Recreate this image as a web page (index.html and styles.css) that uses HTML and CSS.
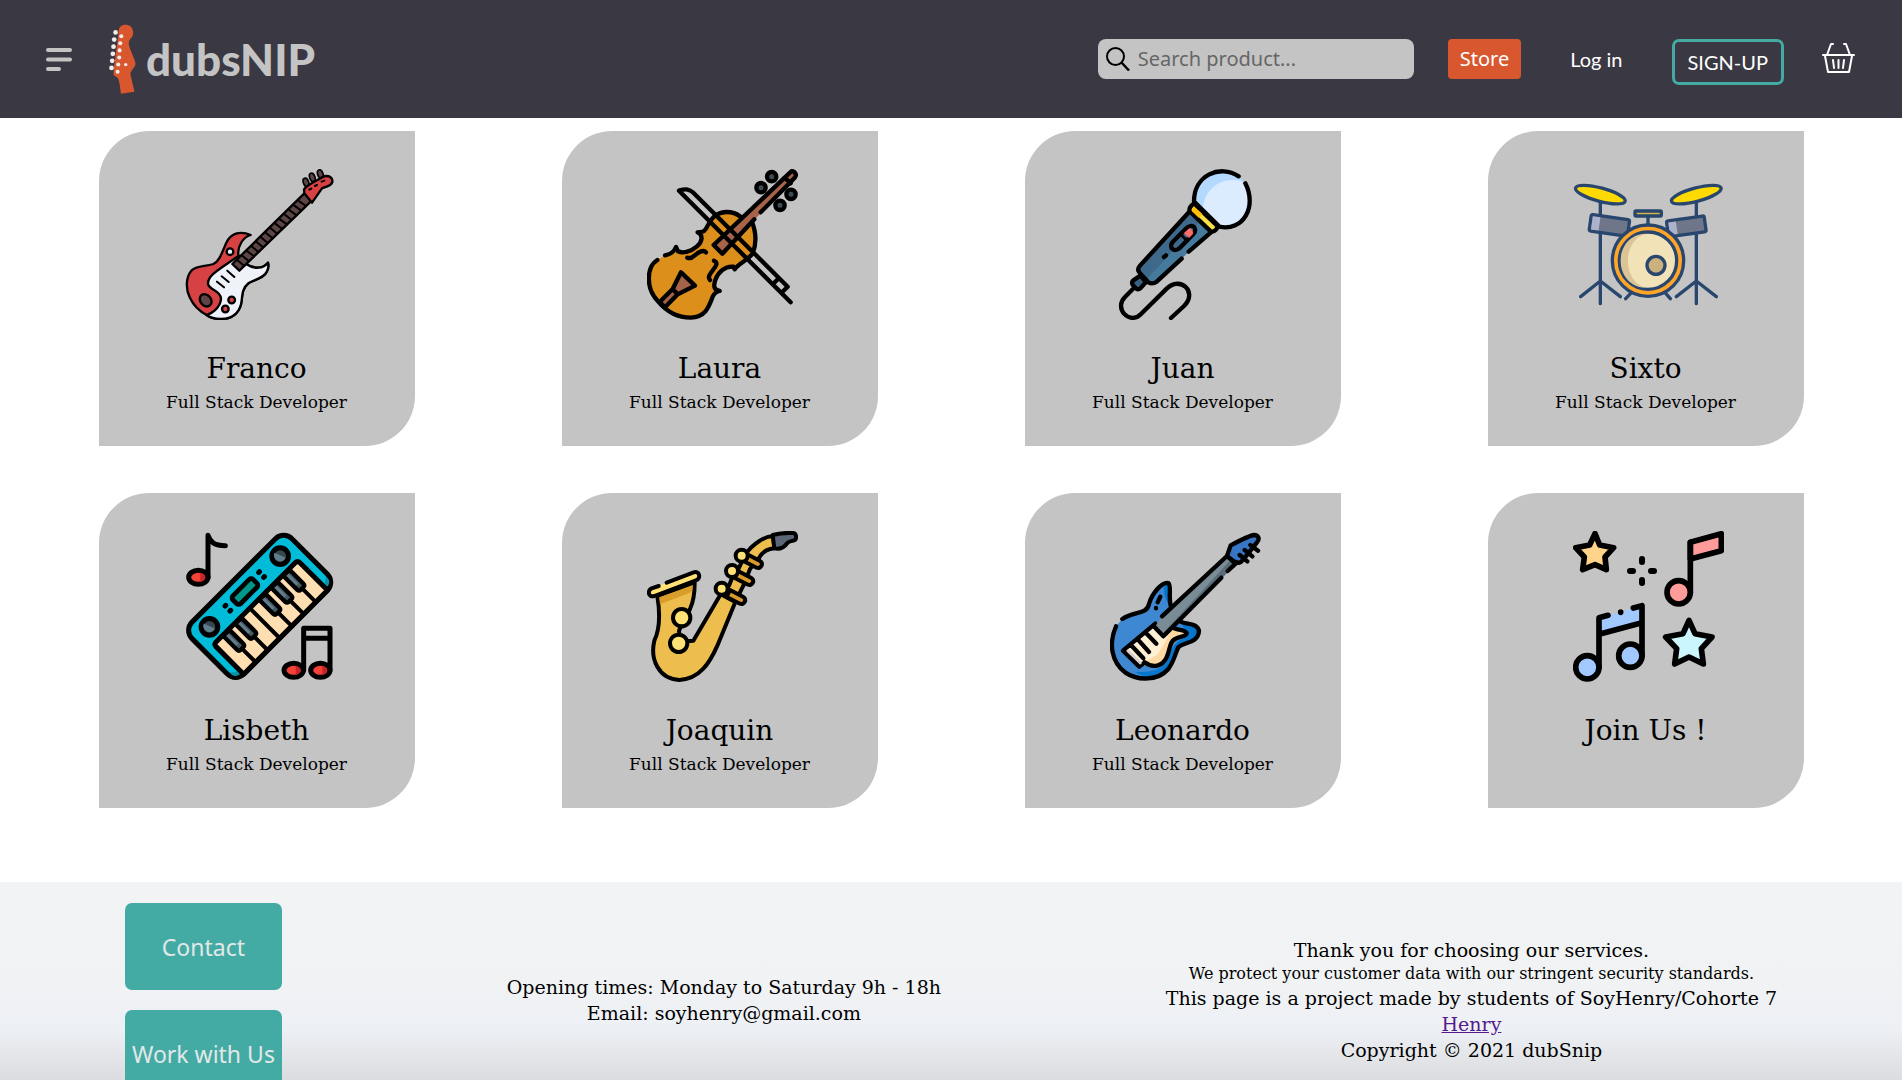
FILE: index.html
```html
<!DOCTYPE html>
<html lang="en">
<head>
<meta charset="utf-8">
<meta name="viewport" content="width=device-width, initial-scale=1">
<title>dubsNIP</title>
<link rel="stylesheet" href="styles.css">
</head>
<body>
<header class="topbar">
  <button class="icon-button" type="button" aria-label="Menu">
    <svg class="menu-icon" viewBox="0 0 27 24" fill="none" stroke="#c4c4c4" stroke-width="4" stroke-linecap="round"><path d="M2 3H24M2 12.500H24M2 22H13"/></svg>
  </button>
  <a class="brand" href="#" aria-label="dubsNIP home">
    <svg class="brand-mark" viewBox="329 69 79 207">
      <path d="M357 95C356 78 365 71 379 71C393 72 401 82 400 98C398 110 387 114 387 127C390 147 402 165 407 186C406 200 392 205 392 218L404 269L364 275C361 255 360 237 354 228L342 220C343 190 352 140 357 95Z" fill="#d8572e"/>
      <g fill="#f2ebea"><circle cx="348" cy="94" r="7"/><circle cx="344" cy="115" r="7"/><circle cx="342" cy="136" r="7"/><circle cx="340" cy="157" r="7"/><circle cx="338" cy="178" r="7"/><circle cx="336" cy="199" r="7"/><circle cx="365" cy="105" r="6"/><circle cx="362" cy="126" r="6"/><circle cx="360" cy="147" r="6"/><circle cx="359" cy="168" r="6"/><circle cx="356" cy="189" r="6"/><circle cx="354" cy="210" r="6"/><circle cx="378" cy="189" r="5"/></g>
    </svg>
    <span class="brand-name">dubsNIP</span>
  </a>
  <nav class="actions">
    <label class="search">
      <svg class="search-icon" viewBox="0 0 24 24" fill="none" stroke="#000" stroke-width="2"><circle cx="9.500" cy="9.500" r="8.500"/><path d="M15.500 15.500L23 23.500" stroke-width="2.500"/></svg>
      <input class="search-input" type="text" placeholder="Search product..." aria-label="Search product">
    </label>
    <button class="store" type="button">Store</button>
    <a class="login" href="#">Log in</a>
    <button class="signup" type="button">SIGN-UP</button>
    <button class="icon-button" type="button" aria-label="Basket">
      <svg class="basket-icon" viewBox="0 0 38 36" fill="none" stroke="#fff" stroke-width="2" stroke-linecap="round" stroke-linejoin="round"><path d="M5 14H36M9 14L13 3H15M32 14L28 3H26M7 15L10 31H31L34 15M15 19L16 27M20.500 19V27M26 19L25 27"/></svg>
    </button>
  </nav>
</header>

<main class="team">
  <article class="card">
    <svg class="card-icon" viewBox="282 147 453 453" stroke="#000" stroke-width="7" stroke-linejoin="round" stroke-linecap="round">
      <path d="M482 345C448 330 422 342 409 368C395 400 388 424 370 432C345 440 318 437 304 452C287 472 287 508 299 532C312 560 330 575 350 585C362 594 377 597 392 597C435 597 452 570 455 542C457 520 459 502 476 489C495 478 522 475 531 454C536 444 536 436 534 428C520 445 495 450 468 432L445 405C442 380 458 352 482 345Z" fill="#d64143"/>
      <path d="M350 585C375 577 393 555 393 535C390 508 356 512 354 490C354 465 385 450 445 408L468 432C495 450 520 445 534 428C536 436 536 444 531 454C522 475 495 478 476 489C459 502 457 520 455 542C452 570 435 597 392 597C377 597 362 594 350 585Z" fill="#f0f2fa"/>
      <path d="M427 432L448 452L666 241L643 220Z" fill="#5c4544"/>
      <path d="M441 419L463 438M455 406L477 424M470 392L492 409M484 378L505 396M499 365L519 382M513 352L533 369M527 338L548 355M542 325L562 341M556 311L577 327M570 298L591 313M585 284L605 300M599 271L620 286M613 257L634 272M628 244L648 258" stroke-width="6"/>
      <g fill="#5c4544" stroke-width="5"><ellipse cx="648" cy="187" rx="8" ry="13" transform="rotate(-20 648 187)"/><ellipse cx="667" cy="172" rx="8" ry="13" transform="rotate(-20 667 172)"/><ellipse cx="691" cy="162" rx="8" ry="13" transform="rotate(-20 691 162)"/></g>
      <path d="M642 208C652 193 688 178 698 171C715 163 729 172 727 187C720 202 708 198 696 205L666 248L643 220Z" fill="#d64143"/>
      <path d="M658 209L664 206M675 198L681 195M695 185L703 182M381 485L402 502M395 469L416 486M412 452L433 471" stroke-width="6"/>
      <circle cx="420" cy="395" r="10" fill="#eaf1f6"/><circle cx="425" cy="540" r="10" fill="#d64143"/><circle cx="406" cy="567" r="10" fill="#d64143"/><ellipse cx="347" cy="541" rx="16" ry="20" transform="rotate(-40 347 541)" fill="#5c4544"/>
    </svg>
    <h2 class="card-name">Franco</h2>
    <p class="card-role">Full Stack Developer</p>
  </article>
  <article class="card">
    <svg class="card-icon" viewBox="291 147 453 453" fill="none" stroke="#000" stroke-width="13" stroke-linejoin="round" stroke-linecap="round">
      <path d="M322 420C290 440 285 505 325 545C350 575 385 593 422 593C465 591 475 565 488 530C493 520 500 515 509 513C493 510 489 500 496 480C505 455 525 438 550 440L554 448C565 430 595 420 608 400C620 370 618 335 605 303C578 275 520 268 495 288C475 305 473 325 462 333C455 338 448 335 443 337C460 345 458 365 440 380C420 397 397 400 384 394L378 381C372 395 365 402 345 406Z" fill="#dc8f1b" stroke="none"/>
      <path d="M322 420C290 440 285 505 325 545C350 575 385 593 422 593C465 591 475 565 488 530C493 520 500 515 509 513C493 510 489 500 496 480C505 455 525 438 550 440L554 448C565 430 595 420 608 400C620 370 618 335 605 303M572 290C545 270 510 272 490 292C475 305 473 325 462 333C455 338 448 335 443 337C460 345 458 365 440 380C420 397 397 400 384 394L378 381C372 395 365 402 345 406"/>
      <path d="M491 375L517 401L615 297L732 183C745 165 733 146 718 156L700 168Z" fill="#a76349" stroke="none"/>
      <path d="M613 298L517 401L491 375L704 173L725 153C737 154 741 166 734 173L716 192L632 277M704 173L722 190"/>
      <path d="M393 457L435 497L383 523L345 562L329 546L368 507ZM368 507L383 523" fill="#a76349"/>
      <path d="M412 413C428 420 435 400 453 394Q463 391 468 397M492 422C510 430 490 447 481 461Q473 472 480 480"/>
      <path d="M387 212L722 547M387 212C410 205 418 208 430 218L713 500L696 517M684 477L669 492"/>
      <g fill="#3f4e54"><circle cx="665" cy="170" r="14"/><circle cx="633" cy="203" r="14"/><circle cx="723" cy="223" r="14"/><circle cx="690" cy="256" r="14"/></g>
    </svg>
    <h2 class="card-name">Laura</h2>
    <p class="card-role">Full Stack Developer</p>
  </article>
  <article class="card">
    <svg class="card-icon" viewBox="270 147 453 453" fill="none" stroke="#000" stroke-width="13" stroke-linejoin="round" stroke-linecap="round">
      <circle cx="606" cy="238" r="84" fill="#b3dafe" stroke="none"/>
      <path d="M552 285C536 230 590 165 663 183C700 215 700 270 668 304C635 330 600 325 552 285Z" fill="#dcecff" stroke="none"/>
      <path d="M656 169C600 132 522 165 522 245L598 320C670 335 712 260 676 190"/>
      <path d="M508 275L357 440C350 450 355 457 365 467L385 487C395 493 400 492 410 485L570 337Z" fill="#467a9d" stroke="none"/>
      <path d="M508 275L357 440C350 450 355 457 378 480L539 306Z" fill="#3f698a" stroke="none"/>
      <path d="M485 416L410 485C400 492 394 492 385 487L360 460C352 452 353 445 360 437L508 275M506 395L572 338"/>
      <path d="M522 251L594 319Q585 338 572 334L508 273Q507 260 522 251Z" fill="#f8df45"/><path d="M522 259L547 282L537 294L515 273Z" fill="#ffc007" stroke="none"/>
      <path d="M361 467L340 481Q333 488 339 496L349 506Q355 510 361 505L378 486Z" fill="#376386"/>
      <path d="M338 508L315 531C280 565 330 617 363 582L440 506C480 466 535 515 492 558L453 594M432 411L438 406"/>
      <path d="M458 366L499 325C515 308 536 325 520 342L480 383C463 400 444 382 458 366Z" fill="#3f698a"/><path d="M492 339L507 354L519 342Q520 330 509 324Z" fill="#ff6b68" stroke="none"/><path d="M481 342L502 363" stroke-width="9"/>
    </svg>
    <h2 class="card-name">Juan</h2>
    <p class="card-role">Full Stack Developer</p>
  </article>
  <article class="card">
    <svg class="card-icon" viewBox="279 147 453 453" fill="none" stroke="#29476e" stroke-width="10" stroke-linejoin="round" stroke-linecap="round">
      <path d="M361 240V551M649 240V551M361 483L302 530M361 483L421 530M649 483L589 530M649 483L709 530M452 520L437 536M557 520L571 536M504 290V315"/>
      <ellipse cx="361" cy="224" rx="77" ry="20" transform="rotate(15 361 224)" fill="#ffda00"/><ellipse cx="649" cy="224" rx="77" ry="20" transform="rotate(-15 649 224)" fill="#ffda00"/>
      <rect x="465" y="273" width="79" height="15" rx="3" fill="#ceb64c"/>
      <g transform="rotate(8 388 317)"><rect x="330" y="291" width="116" height="50" rx="5" fill="#6f7689"/><path d="M335 296H358V336H335Z" fill="#adb2cc" stroke="none"/></g>
      <g transform="rotate(-8 620 319)"><rect x="562" y="295" width="114" height="48" rx="5" fill="#6f7689"/><path d="M567 300H590V338H567Z" fill="#adb2cc" stroke="none"/></g>
      <circle cx="504" cy="422" r="107" fill="#ffa528"/><circle cx="504" cy="422" r="86" fill="#f2e2b8"/>
      <path d="M500 341C396 341 396 503 500 503C425 489 425 355 500 341Z" fill="#dbc597" stroke="none"/>
      <circle cx="528" cy="436" r="27" fill="#cab17d"/>
    </svg>
    <h2 class="card-name">Sixto</h2>
    <p class="card-role">Full Stack Developer</p>
  </article>
  <article class="card">
    <svg class="card-icon" viewBox="282 126 453 453" fill="none" stroke="#000" stroke-width="15" stroke-linejoin="round" stroke-linecap="round">
      <g transform="translate(509 352) rotate(-45)">
        <rect x="-212" y="-110" width="424" height="220" rx="35" fill="#00bcd8"/>
        <path d="M-204 78V86Q-202 100 -186 102V90ZM204 78V86Q202 100 186 102V90Z" fill="#0794a8" stroke="none"/>
        <path d="M-178 110V-7Q-178 -17 -168 -17H168Q178 -17 178 -7V110Z" fill="#ffdfb2"/>
        <path d="M-127 50V105M-76 50V105M-25 -15V105M26 50V105M77 50V105M128 50V105" stroke-width="12"/>
        <g fill="#475863" stroke-width="13"><path id="key" d="M-140 -14H-114V44Q-114 52 -122 52H-132Q-140 52 -140 44Z"/><use href="#key" x="51"/><use href="#key" x="153"/><use href="#key" x="204"/><use href="#key" x="255"/></g>
        <g stroke="#607d8b" stroke-width="9" stroke-linecap="butt"><path d="M-129 -8V34M-78 -8V34M24 -8V34M75 -8V34M126 -8V34"/></g>
        <rect x="-43" y="-79" width="86" height="33" rx="8" fill="#009688" stroke-width="14"/>
        <path d="M-73 -74H-70M-73 -53H-70M70 -74H73M70 -53H73"/>
        <g fill="#37474f"><circle cx="-150" cy="-63" r="25"/><circle cx="150" cy="-63" r="25"/></g>
        <g fill="#607d8b" stroke="none"><path d="M-155 -82A18 18 0 0 0 -142 -48ZM145 -82A18 18 0 0 0 158 -48Z"/></g>
      </g>
      <g fill="#f44336"><ellipse cx="325" cy="265" rx="29" ry="21"/><ellipse cx="611" cy="544" rx="29" ry="21"/><ellipse cx="691" cy="544" rx="29" ry="21"/></g>
      <g fill="#c6242a" stroke="none"><path d="M331 251Q345 254 346 265Q345 276 331 279ZM617 530Q632 534 632 544Q631 555 617 558ZM697 530Q712 534 712 544Q711 555 697 558Z"/></g>
      <path d="M354 265V139C361 160 373 170 406 170M641 544V418H720V544M641 448H720"/>
    </svg>
    <h2 class="card-name">Lisbeth</h2>
    <p class="card-role">Full Stack Developer</p>
  </article>
  <article class="card">
    <svg class="card-icon" viewBox="291 126 453 453" fill="none" stroke="#000" stroke-width="12" stroke-linejoin="round" stroke-linecap="round">
      <path d="M322 321C330 370 330 420 313 455C300 510 325 570 388 573C450 570 480 520 502 470L556 339L512 316L430 455L390 458L387 425L420 360C432 335 434 310 434 282Z" fill="#edbe4d"/>
      <path d="M328 325L429 288Q428 300 424 310L330 346Z" fill="#d99d2c" stroke="none"/>
      <path d="M305 298L428 251C449 245 454 268 438 274L313 321C295 327 289 304 305 298Z" fill="#ffe175" stroke="none"/>
      <path d="M326 291L305 298C291 304 295 327 313 321L438 274C454 268 449 245 431 250L350 281"/>
      <path d="M537 290L545 270L563 245L585 198C610 160 650 140 670 142L673 178C650 180 635 190 625 210L600 240L580 290L565 320L525 306Z" fill="#edbe4d"/>
      <path d="M668 138C690 132 710 131 730 132C740 134 740 148 735 153C725 158 718 155 712 162C702 176 690 182 673 178Z" fill="#5b6778"/>
      <g fill="#d99a2c"><path id="valve" d="M590 195L629 215C643 222 633 241 620 236L580 216Z"/><use href="#valve" x="-26" y="51"/><use href="#valve" x="-50" y="108"/></g>
      <g fill="#ffe175"><circle cx="575" cy="200" r="18"/><circle cx="546" cy="246" r="18"/><circle cx="515" cy="299" r="18"/><circle cx="395" cy="386" r="26"/><circle cx="386" cy="463" r="26"/></g>
    </svg>
    <h2 class="card-name">Joaquin</h2>
    <p class="card-role">Full Stack Developer</p>
  </article>
  <article class="card">
    <svg class="card-icon" viewBox="270 126 453 453" fill="none" stroke="#000" stroke-width="13" stroke-linejoin="round" stroke-linecap="round">
      <path d="M288 412C265 465 275 520 315 550C355 577 415 575 445 540C463 515 465 495 475 475C490 458 535 465 537 425C530 400 500 408 482 398L452 350C445 320 455 290 445 282C425 278 395 315 387 345C382 385 350 370 307 390Z" fill="#3e87d1" stroke="none"/>
      <path d="M432 290C430 310 435 335 452 352C447 325 456 290 445 282ZM482 398C500 408 530 400 537 425C535 465 490 458 475 475C465 495 463 515 445 540C420 570 375 570 345 548C390 552 425 545 445 510C460 450 485 455 505 440Z" fill="#0576cb" stroke="none"/>
      <path d="M288 412C265 465 275 520 315 550C355 577 415 575 445 540C463 515 465 495 475 475C490 458 535 465 537 425C530 400 500 408 482 398M452 350C445 320 455 290 445 282C425 278 395 315 387 345C380 378 345 365 307 390"/>
      <path d="M406 404L309 485L365 525C390 536 415 535 433 512C452 485 442 470 460 453C475 440 500 440 500 432C492 420 470 422 458 410Z" fill="#ffefd3" stroke="none"/>
      <path d="M458 410C492 420 500 432 500 435C440 450 460 525 410 531C380 530 372 520 365 518C430 505 425 465 458 420Z" fill="#ffd9a1" stroke="none"/>
      <path d="M406 404L309 485L358 533L374 520C400 540 427 530 439 507C452 480 447 460 465 450C480 440 500 445 500 432C492 420 480 425 462 418M332 467L370 508M354 452L387 489M378 432L409 464"/><path d="M324 486L361 522" stroke="#d7ced1" stroke-width="8"/>
      <path d="M621 201L643 222L430 440L406 412L426 382Z" fill="#798c95" stroke="none"/><path d="M632 213L430 432L440 440L645 227Z" fill="#596c77" stroke="none"/>
      <path d="M426 382L621 201L647 224L623 246M604 266L430 442L400 410"/>
      <path d="M621 201L632 169C655 157 690 139 702 138C716 138 720 150 711 160L668 214C660 225 652 221 643 218Z" fill="#3775c5"/>
      <path d="M659 198L682 217M674 183L697 202M691 168L714 185M421 323L413 340M408 357V358" stroke-width="13"/>
    </svg>
    <h2 class="card-name">Leonardo</h2>
    <p class="card-role">Full Stack Developer</p>
  </article>
  <article class="card">
    <svg class="card-icon" viewBox="279 126 453 453" fill="none" stroke="#000" stroke-width="17" stroke-linejoin="round" stroke-linecap="round">
      <path d="M345 134L359 168L401 176L375 204L379 242L345 227L308 242L313 204L287 176L329 168Z" fill="#ffd389"/>
      <path d="M627 394L645 434L696 444L664 479L670 525L627 504L584 525L590 479L557 444L609 434Z" fill="#ccf6fd"/>
      <path d="M631 160L724 134V185L631 210Z" fill="#ff9b98"/><path d="M631 160V310"/><circle cx="596" cy="310" r="35" fill="#ff9b98"/>
      <path d="M357 387L486 350V400L357 435Z" fill="#a1c8ff" stroke="none"/>
      <path d="M384 379L357 386V535M460 357L486 350V500M357 436L486 401M422 369V370"/>
      <circle cx="322" cy="535" r="35" fill="#a1c8ff"/><circle cx="451" cy="500" r="35" fill="#a1c8ff"/>
      <path d="M486 210V219M486 273V282M450 246H459M513 246H522" stroke-width="18"/>
    </svg>
    <h2 class="card-name">Join Us !</h2>
  </article>
</main>

<footer class="footer">
  <div class="footer-actions">
    <button class="footer-button" type="button">Contact</button>
    <button class="footer-button" type="button">Work with Us</button>
  </div>
  <div class="footer-text">
    <p>Opening times: Monday to Saturday 9h - 18h</p>
    <p>Email: soyhenry@gmail.com</p>
  </div>
  <div class="footer-text">
    <p>Thank you for choosing our services.</p>
    <p class="small">We protect your customer data with our stringent security standards.</p>
    <p>This page is a project made by students of SoyHenry/Cohorte 7</p>
    <p><a class="footer-link" href="#">Henry</a></p>
    <p>Copyright © 2021 dubSnip</p>
  </div>
</footer>
</body>
</html>
```
FILE: styles.css
```css
* {
  box-sizing: border-box;
}

body {
  margin: 0;
  background: #fff;
  color: #000;
  font-family: "DejaVu Serif", serif;
}

h2,
p {
  margin: 0;
  font-weight: 400;
}

button {
  border: 0;
  cursor: pointer;
}

svg {
  display: block;
}

.topbar {
  display: flex;
  align-items: center;
  min-height: 118px;
  padding: 0 46px;
  background: #3a3842;
}

.icon-button {
  padding: 0;
  background: none;
}

.menu-icon {
  width: 27px;
  height: 24px;
}

.brand {
  display: flex;
  align-items: center;
  gap: 10px;
  margin-left: 36px;
  color: #c4c4c4;
  text-decoration: none;
}

.brand-mark {
  width: 27px;
  height: 70px;
}

.brand-name {
  font: 900 44px/60px Lato, sans-serif;
}

.actions {
  display: flex;
  align-items: center;
  gap: 34px;
  margin-left: auto;
}

.search {
  display: flex;
  align-items: center;
  gap: 8px;
  width: 316px;
  height: 40px;
  padding: 0 8px;
  border-radius: 8px;
  background: #c4c4c4;
}

.search-icon {
  flex: none;
  width: 24px;
  height: 24px;
}

.search-input {
  flex: 1;
  min-width: 0;
  padding: 0;
  border: 0;
  outline: 0;
  background: none;
  color: #222;
  font: 20px/28px "Noto Sans", sans-serif;
}

.search-input::placeholder {
  color: #666;
  opacity: 1;
}

.store {
  height: 40px;
  padding: 0 12px;
  border-radius: 4px;
  background: #d8572e;
  color: #fff;
  font: 20px/28px "Noto Sans", sans-serif;
}

.login {
  padding: 0 15px;
  color: #fff;
  font: 20px/28px Lato, sans-serif;
  text-decoration: none;
}

.signup {
  height: 46px;
  padding: 0 13px;
  margin-top: 6px;
  border: 3px solid #43aba4;
  border-radius: 7px;
  background: none;
  color: #fff;
  font: 20px/28px Lato, sans-serif;
}

.basket-icon {
  width: 38px;
  height: 36px;
}

.team {
  display: grid;
  grid-template-columns: repeat(4, 1fr);
  justify-items: center;
  row-gap: 47px;
  padding: 13px 25px 74px;
}

.card {
  display: flex;
  flex-direction: column;
  align-items: center;
  width: 316px;
  min-height: 315px;
  padding-top: 38px;
  border-radius: 50px 0;
  background: #c4c4c4;
  text-align: center;
}

.card-icon {
  width: 151px;
  height: 151px;
  margin: 0 0 29px 5px;
}

.card-name {
  font-size: 28px;
  line-height: 40px;
}

.card-role {
  font-size: 17px;
  line-height: 26px;
}

.footer {
  display: grid;
  grid-template-columns: 43fr 67fr 91fr;
  align-items: center;
  justify-items: center;
  padding: 21px 0;
  background: linear-gradient(#f2f3f4 0%, #f0f2f4 45%, #edf0f5 62%, #dcdde0 83%, #dcdde0 100%);
}

.footer-actions {
  display: grid;
  gap: 20px;
}

.footer-button {
  width: 157px;
  height: 87px;
  padding: 0;
  border-radius: 7px;
  background: #43aba4;
  color: #e2e8e8;
  font: 23px/32px "Noto Sans", sans-serif;
}

.footer-text {
  font-size: 19px;
  line-height: 26px;
  text-align: center;
}

.small {
  font-size: 16px;
  line-height: 22px;
}

.footer-link {
  color: #551a8b;
}
```
